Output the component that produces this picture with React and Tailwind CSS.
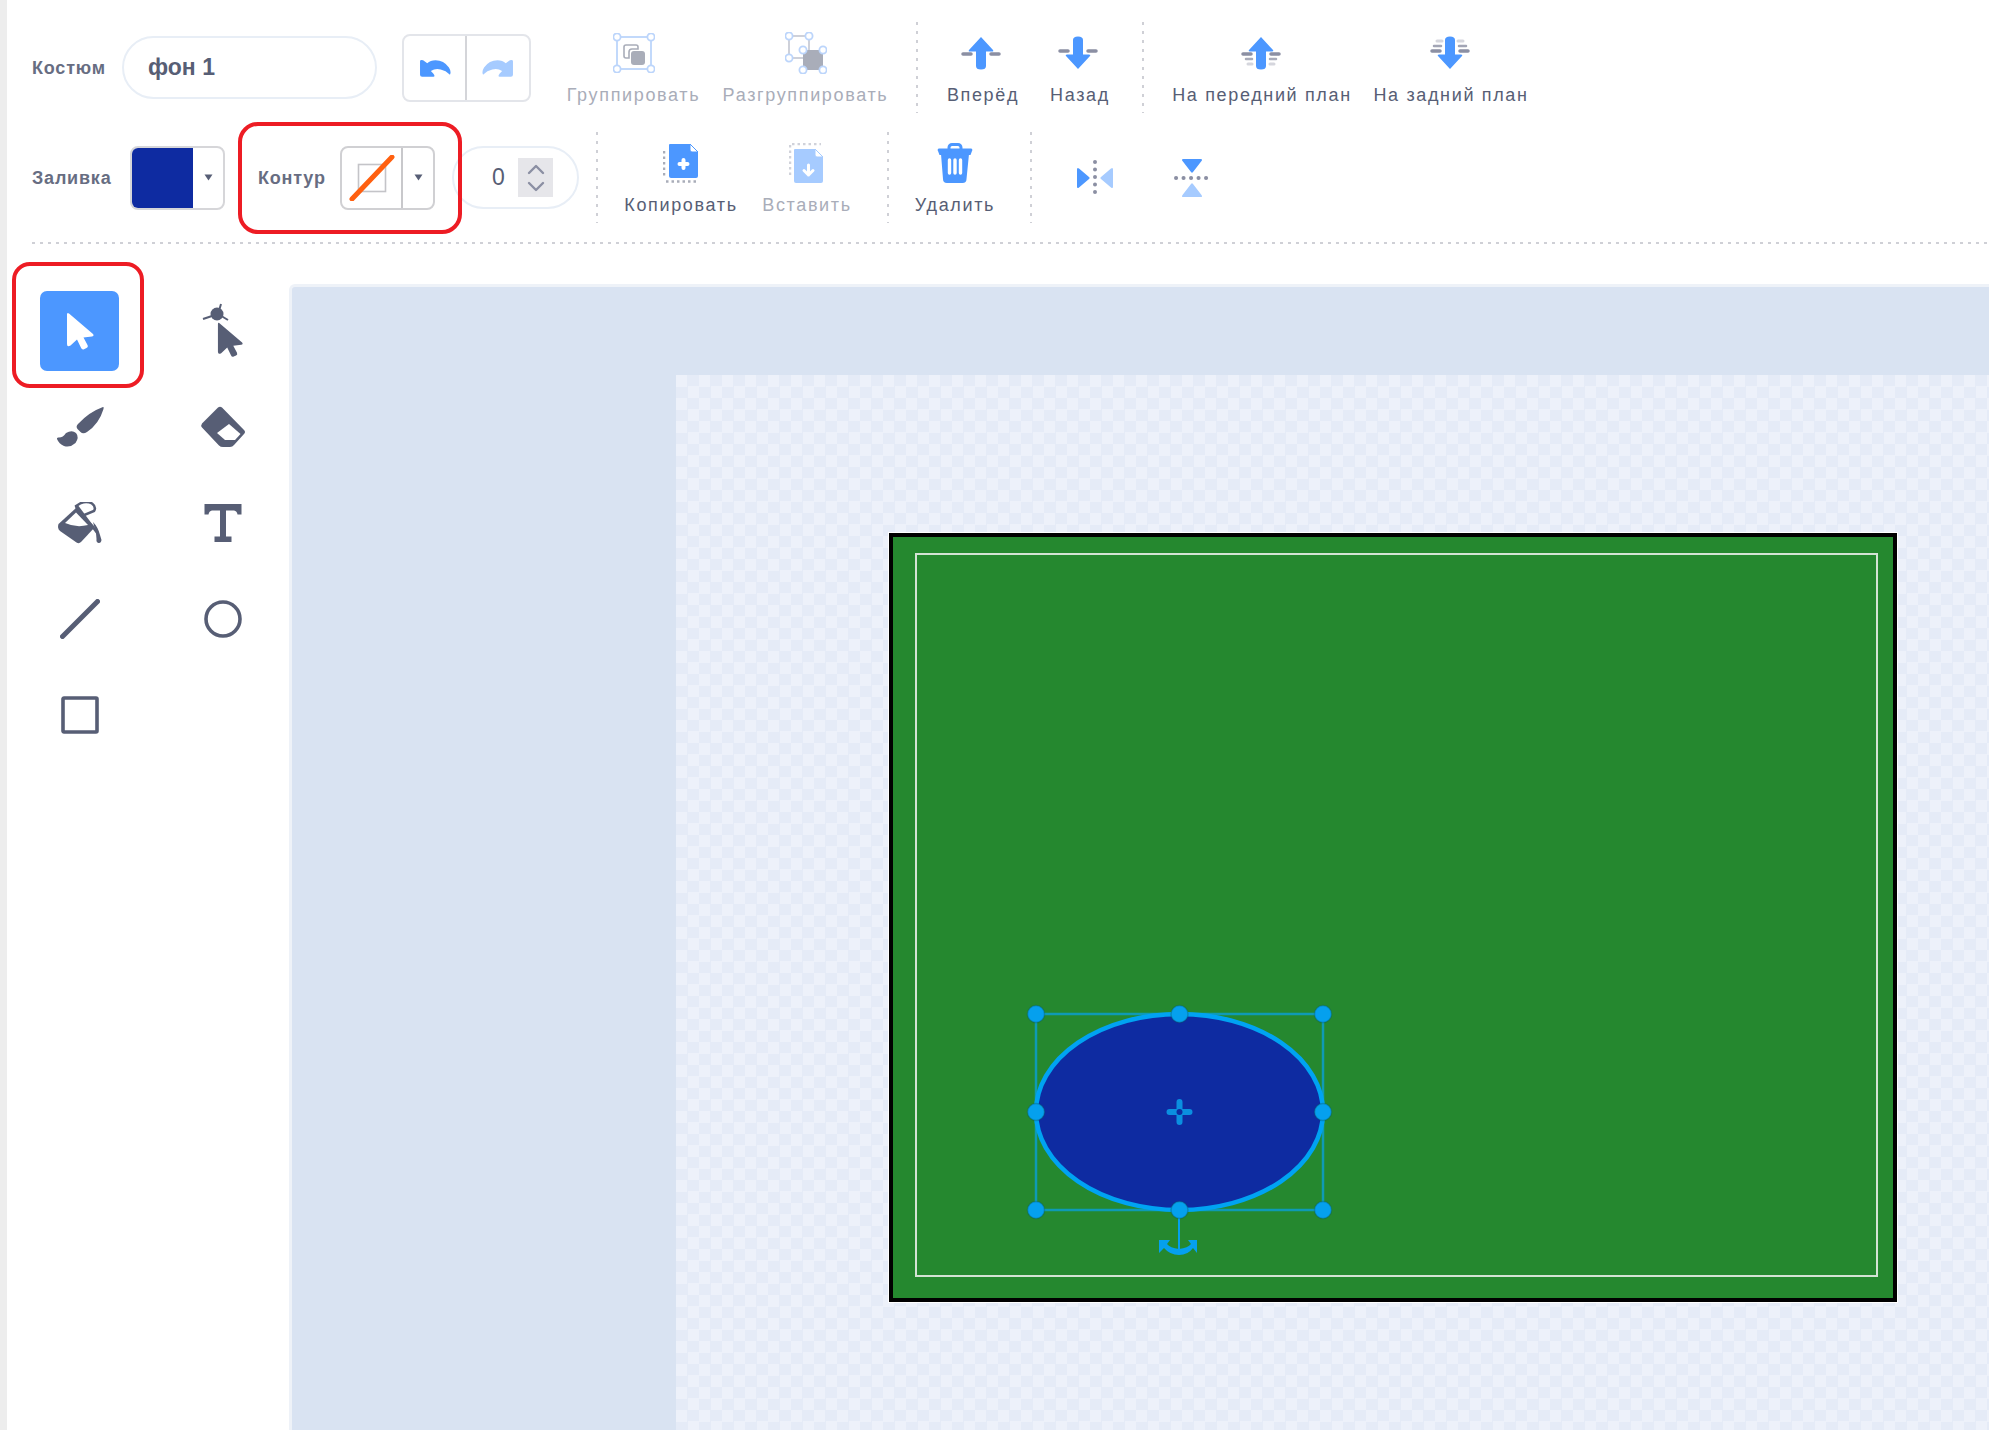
import React from "react";

const ink = "#575e75";
const blue = "#4c97ff";
const lightBlue = "#a6cbff";
const grey = "#8b8fa3";
const handle = "#bcd5fb";

const VDots = () => (
  <div className="w-[2px] h-[91px] shrink-0 bg-[repeating-linear-gradient(180deg,#cfd0d6_0_3px,transparent_3px_9px)]" />
);

function Action({ w, ml, icon, label, muted, iconClass }) {
  return (
    <div style={{ width: w, marginLeft: ml }} className="h-[91px] shrink-0 flex flex-col items-center pt-[11px]">
      <div className={`h-[40px] flex items-center justify-center ${iconClass || ""}`}>{icon}</div>
      <div className={`mt-[12px] h-[20px] leading-[20px] text-[18px] tracking-[1.65px] whitespace-nowrap ${muted ? "text-[#a9adb9]" : "text-[#575e75]"}`}>
        {label}
      </div>
    </div>
  );
}

const Caret = () => (
  <svg width="9" height="7" viewBox="0 0 9 7"><path d="M0.5 0.5H8.5L4.5 6.5Z" fill={ink} /></svg>
);

const GroupIcon = () => (
  <svg width="42" height="40" viewBox="0 0 42 40">
    <rect x="4" y="4" width="34" height="32" fill="none" stroke={handle} strokeWidth="1.8" />
    <path d="M13 12h10a2 2 0 0 1 2 2v2h-6a3 3 0 0 0-3 3v6h-3a2 2 0 0 1-2-2v-9a2 2 0 0 1 2-2Z" fill="none" stroke="#a9adb9" strokeWidth="1.6" />
    <rect x="18" y="18" width="14" height="14" rx="3" fill="#a9adb9" />
    {[[4, 4], [38, 4], [4, 36], [38, 36]].map(([x, y]) => (
      <circle key={x + "-" + y} cx={x} cy={y} r="3.6" fill="#fff" stroke={handle} strokeWidth="1.8" />
    ))}
  </svg>
);

const UngroupIcon = () => (
  <svg width="42" height="42" viewBox="0 0 42 42">
    <rect x="4" y="4" width="20" height="22" fill="none" stroke="#c9ccd6" strokeWidth="1.8" />
    <rect x="18" y="18" width="20" height="20" fill="#a9adb9" />
    {[[4, 4], [24, 4], [4, 26], [18, 18], [38, 18], [18, 38], [38, 38]].map(([x, y]) => (
      <circle key={x + "-" + y} cx={x} cy={y} r="3.6" fill="#fff" stroke={handle} strokeWidth="1.8" />
    ))}
  </svg>
);

const UpArrow = ({ lines }) => (
  <svg width="42" height="36" viewBox="0 0 42 36">
    <path d="M3 19h8M31 19h8" stroke={grey} strokeWidth="3.500" strokeLinecap="round" />
    {lines && <path d="M6 24h6M30 24h6" stroke={grey} strokeWidth="2.500" strokeLinecap="round" opacity="0.75" />}
    {lines && <path d="M8 29h4M30 29h4" stroke="#d5d6dd" strokeWidth="3" strokeLinecap="round" />}
    <path d="M21 2 L33 15 Q34 16.500 32 16.500 H26 V31 Q26 34.500 21 34.500 Q16 34.500 16 31 V16.500 H10 Q8 16.500 9 15 Z" fill={blue} />
  </svg>
);

const DownArrow = ({ lines }) => (
  <svg width="42" height="36" viewBox="0 0 42 36">
    {lines && <path d="M8 6h5M29 6h5" stroke="#d5d6dd" strokeWidth="3" strokeLinecap="round" />}
    {lines && <path d="M5 11h7M30 11h7" stroke={grey} strokeWidth="2.500" strokeLinecap="round" opacity="0.8" />}
    <path d="M3 16h8M31 16h8" stroke={grey} strokeWidth="3.500" strokeLinecap="round" />
    <path d="M21 34 L33 21 Q34 19.500 32 19.500 H26 V5 Q26 1.500 21 1.500 Q16 1.500 16 5 V19.500 H10 Q8 19.500 9 21 Z" fill={blue} />
  </svg>
);

const CopyIcon = () => (
  <svg width="36" height="40" viewBox="0 0 36 40">
    <path d="M1 8V34" stroke="#a9adb9" strokeWidth="2.500" strokeDasharray="2.500 3" />
    <path d="M3 38.500H35" stroke="#a9adb9" strokeWidth="2.500" strokeDasharray="2.500 3" />
    <path d="M6 2a1 1 0 0 1 1-1h20l8 8v24a2 2 0 0 1-2 2H8a2 2 0 0 1-2-2Z" fill={blue} />
    <path d="M27 1v6a2 2 0 0 0 2 2h6Z" fill="#fff" stroke={blue} strokeWidth="1" />
    <path d="M20.500 17v8M16.500 21h8" stroke="#fff" strokeWidth="4" strokeLinecap="round" />
  </svg>
);

const PasteIcon = () => (
  <svg width="36" height="40" viewBox="0 0 36 40">
    <path d="M1 2V32" stroke="#d0d2da" strokeWidth="2.500" strokeDasharray="2.500 3" />
    <path d="M3 1H32" stroke="#d0d2da" strokeWidth="2.500" strokeDasharray="2.500 3" />
    <path d="M5 7a1 1 0 0 1 1-1h20l8 8v24a2 2 0 0 1-2 2H7a2 2 0 0 1-2-2Z" fill={lightBlue} />
    <path d="M26 6v6a2 2 0 0 0 2 2h6Z" fill="#fff" stroke={lightBlue} strokeWidth="1" />
    <path d="M19.500 22v10M15 27.500l4.500 4.500 4.500-4.500" fill="none" stroke="#fff" strokeWidth="3" strokeLinecap="round" strokeLinejoin="round" />
  </svg>
);

const TrashIcon = () => (
  <svg width="36" height="40" viewBox="0 0 36 40">
    <path d="M12 6V4.500A3 3 0 0 1 15 1.500h6a3 3 0 0 1 3 3V6" fill="none" stroke={blue} strokeWidth="3" />
    <path d="M2 5.500h32a1.500 1.500 0 0 1 1 2.500l-1.500 4H2.500L1 8a1.500 1.500 0 0 1 1-2.500Z" fill={blue} />
    <path d="M4 11h28l-2.500 25a4 4 0 0 1-4 4h-15.500a4 4 0 0 1-4-4Z" fill={blue} />
    <path d="M12.500 17v13M18 17v13M23.500 17v13" stroke="#fff" strokeWidth="3.400" strokeLinecap="round" />
  </svg>
);

const FlipH = () => (
  <svg width="40" height="36" viewBox="0 0 40 36">
    <path d="M2 9.500 Q2 7 4 8.500 L14 17 Q15.500 18 14 19 L4 27.500 Q2 29 2 26.500Z" fill={blue} />
    <path d="M38 9.500 Q38 7 36 8.500 L26 17 Q24.500 18 26 19 L36 27.500 Q38 29 38 26.500Z" fill={lightBlue} />
    <path d="M20 2V34" stroke={grey} strokeWidth="4" strokeLinecap="round" strokeDasharray="0.1 7.400" />
  </svg>
);

const FlipV = () => (
  <svg width="36" height="40" viewBox="0 0 36 40">
    <path d="M9.500 1 Q7 1 8.500 3 L17 14 Q18 15.500 19 14 L27.500 3 Q29 1 26.500 1Z" fill={blue} />
    <path d="M9.500 39 Q7 39 8.500 37 L17 26 Q18 24.500 19 26 L27.500 37 Q29 39 26.500 39Z" fill={lightBlue} />
    <path d="M2 20H34" stroke={grey} strokeWidth="4" strokeLinecap="round" strokeDasharray="0.1 7.400" />
  </svg>
);

const cursorPath = "M1 2.500Q1 0 3 1.500L27 22Q28.500 24 26 24.500L17.500 25.500L21.500 33Q22.500 35 20.500 36L18 37.200Q16 38 15 35.800L11 27.500L4.500 33.500Q1 35.500 1 32Z";

const undoPath = "M1 2L1 15Q1 17 3 17H14Q16 17 14 14L11.500 11.500Q16 8.500 21 10Q26 11 30 15Q31.500 12 29 8Q24 1 16 1Q11 1 8 4L4 1Q1 0 1 2Z";

const tools = [
  <div key="select" className="w-[79px] h-[80px] rounded-[7px] bg-[#4c97ff] flex items-center justify-center">
    <svg width="28" height="38" viewBox="0 0 28 38"><path d={cursorPath} fill="#fff" /></svg>
  </div>,
  <svg key="reshape" width="46" height="56" viewBox="0 0 46 56" className="-ml-[2px]">
    <path d="M19 11 L22 1M19 11 L4 16M19 11 L29 17" stroke={ink} strokeWidth="2" />
    <circle cx="18" cy="11" r="6.500" fill={ink} />
    <path transform="translate(18 19) scale(0.93)" d={cursorPath} fill={ink} stroke="#fff" strokeWidth="2" paintOrder="stroke" />
  </svg>,
  <svg key="brush" width="48" height="42" viewBox="0 0 48 42">
    <path d="M47 1 Q48 0.500 47.500 3 Q43 18 31 26 Q27 28.500 24.500 26 L21.500 23 Q19.500 20.500 22 18 Q33 6 47 1Z" fill={ink} />
    <path d="M10 27 Q16 23.500 20 27 Q23.500 31 19.500 37 Q14 42 8 40 Q3 38 1 33 Q0.500 31 3 31.500 Q7 31.500 10 27Z" fill={ink} />
  </svg>,
  <svg key="eraser" width="46" height="42" viewBox="0 0 46 42">
    <path d="M18 1.500 Q20 0 22 1.500 L44 24 Q46 26 44 28 L34 39 Q32.500 41 30 41 H23 Q20.500 41 19 39.500 L2 21.500 Q0.500 19.500 2 17.500Z" fill={ink} />
    <path d="M29 18 L40.500 28 L35 34 H25 L17 27 Z" fill="#fff" />
  </svg>,
  <svg key="fill" width="46" height="42" viewBox="0 0 46 42">
    <path d="M1.500 22 L19 6 L38 25 L24 40 Q22 42 19.500 40.500 L3 29 Q0 26 1.500 22Z" fill={ink} />
    <path d="M8 21 L19 10.500 L31 23 Q19 26 8 21Z" fill="#fff" />
    <path d="M24 1 Q30 -1 35 1.500 Q39.500 5 37 9 L25 14 Q20 8 19 4Z" fill="none" stroke={ink} strokeWidth="2.500" />
    <path d="M20 4 L41 32" stroke={ink} strokeWidth="2.500" />
    <path d="M36 20 Q41 25 43 33 L44.500 38 Q44 41.500 41.500 41 Q39 40.500 39.500 37 L39 31Z" fill={ink} />
  </svg>,
  <svg key="text" width="40" height="40" viewBox="0 0 40 40" aria-hidden="true">
    <path d="M1.500 1H38.500V11.500H34.500Q34 8 31 7.500H23V33.500H28.500V39H11.500V33.500H17V7.500H9Q6 8 5.500 11.500H1.500Z" fill={ink} />
  </svg>,
  <svg key="line" width="40" height="40" viewBox="0 0 40 40"><path d="M2.500 37.500L37.500 2.500" stroke={ink} strokeWidth="5" strokeLinecap="round" /></svg>,
  <svg key="oval" width="38" height="38" viewBox="0 0 38 38"><circle cx="19" cy="19" r="17" fill="none" stroke={ink} strokeWidth="3.600" /></svg>,
  <svg key="rect" width="38" height="38" viewBox="0 0 38 38"><rect x="2" y="2" width="34" height="34" rx="1" fill="none" stroke={ink} strokeWidth="3.600" /></svg>,
];

const labelClass = "shrink-0 mt-[2px] text-[18px] font-bold tracking-[0.8px] whitespace-nowrap opacity-90";

export default function App() {
  return (
    <div className="relative w-[1989px] h-[1430px] overflow-hidden bg-white flex font-['Liberation_Sans',Arial,sans-serif] text-[#575e75]">
      <div className="w-[7px] h-full shrink-0 bg-[#ededed]" />
      <div className="flex-1 min-w-0 flex flex-col">
        <div className="pt-[22px] h-[242px] flex flex-col gap-[19px] shrink-0">
          <div className="h-[91px] flex items-center">
            <div className={`w-[90px] ml-[25px] ${labelClass}`}>Костюм</div>
            <div className="w-[255px] h-[63px] shrink-0 rounded-full border-[2px] border-[#e8eef6] flex items-center pl-[24px] text-[23px] font-bold">фон 1</div>
            <div className="ml-[25px] w-[129px] h-[68px] shrink-0 rounded-[8px] border-[2px] border-[#e3e5ea] flex">
              <div className="w-[63px] border-r-[2px] border-[#d4d5d9] flex items-center justify-center">
                <svg width="32" height="18" viewBox="0 0 31 17"><path d={undoPath} fill={blue} /></svg>
              </div>
              <div className="flex-1 flex items-center justify-center">
                <svg width="32" height="18" viewBox="0 0 31 17"><path transform="translate(31 0) scale(-1 1)" d={undoPath} fill={lightBlue} /></svg>
              </div>
            </div>
            <Action w={135} ml={35} icon={<GroupIcon />} label="Группировать" muted />
            <Action w={175} ml={17} icon={<UngroupIcon />} label="Разгруппировать" muted />
            <div className="ml-[23px]"><VDots /></div>
            <Action w={100} ml={15} icon={<UpArrow />} label="Вперёд" iconClass="-translate-x-[2px]" />
            <Action w={94} ml={0} icon={<DownArrow />} label="Назад" iconClass="-translate-x-[2px]" />
            <div className="ml-[15px]"><VDots /></div>
            <Action w={200} ml={18} icon={<UpArrow lines />} label="На передний план" iconClass="-translate-x-[1px]" />
            <Action w={178} ml={0} icon={<DownArrow lines />} label="На задний план" iconClass="-translate-x-[1px]" />
          </div>
          <div className="h-[91px] flex items-center">
            <div className={`w-[98px] ml-[25px] ${labelClass}`}>Заливка</div>
            <div className="w-[95px] h-[64px] shrink-0 rounded-[8px] border-[2px] border-[#d6d6d9] flex overflow-hidden">
              <div className="w-[63px] -ml-[2px] -my-[2px] bg-[#0e2ba1] rounded-l-[8px]" />
              <div className="flex-1 flex items-center justify-center"><Caret /></div>
            </div>
            <div className={`w-[82px] ml-[33px] ${labelClass}`}>Контур</div>
            <div className="w-[95px] h-[64px] shrink-0 rounded-[8px] border-[2px] border-[#d0d0d3] flex">
              <div className="w-[61px] border-r-[2px] border-[#c8c8cb] flex items-center justify-center">
                <svg width="46" height="46" viewBox="0 0 46 46">
                  <rect x="9.500" y="9.500" width="27" height="27" fill="none" stroke="#c4c4c8" strokeWidth="1.600" />
                  <path d="M3 44L43 2" stroke="#ff6010" strokeWidth="5" strokeLinecap="round" />
                </svg>
              </div>
              <div className="flex-1 flex items-center justify-center"><Caret /></div>
            </div>
            <div className="ml-[17px] w-[127px] h-[63px] shrink-0 rounded-full border-[2px] border-[#e8eef6] flex items-center pl-[38px] gap-[11px]">
              <span className="text-[23px] w-[15px] leading-none">0</span>
              <div className="w-[35px] h-[39px] bg-[#e6e6ea] flex items-center justify-center">
                <svg width="20" height="30" viewBox="0 0 20 30"><path d="M3 10L10 3L17 10M3 20L10 27L17 20" fill="none" stroke={grey} strokeWidth="2.400" strokeLinecap="round" strokeLinejoin="round" /></svg>
              </div>
            </div>
            <div className="ml-[17px]"><VDots /></div>
            <Action w={130} ml={18} icon={<CopyIcon />} label="Копировать" />
            <Action w={122} ml={0} icon={<PasteIcon />} label="Вставить" muted />
            <div className="ml-[19px]"><VDots /></div>
            <Action w={100} ml={16} icon={<TrashIcon />} label="Удалить" />
            <div className="ml-[25px]"><VDots /></div>
            <div className="ml-[33px] w-[60px] flex justify-center"><FlipH /></div>
            <div className="ml-[37px] w-[60px] flex justify-center"><FlipV /></div>
          </div>
        </div>
        <div className="ml-[25px] h-[2px] shrink-0 bg-[repeating-linear-gradient(90deg,#cfd0d6_0_3px,transparent_3px_8px)]" />
        <div className="flex-1 min-h-0 flex pt-[39px]">
          <div className="w-[282px] shrink-0">
            <div className="grid grid-cols-[145px_142px] auto-rows-[96px] justify-items-center items-center">
              {tools}
            </div>
          </div>
          <div className="flex-1 min-w-0 mt-[1px] rounded-tl-[6px] border-l-[3px] border-t-[3px] border-[#eef2f8] bg-[#d9e3f2] pl-[384px] pt-[88px]">
            <div className="h-full pl-[213px] pt-[158px] bg-[repeating-conic-gradient(#e5ebf7_0_25%,#edf1fa_0_50%)] bg-[length:23px_23px]">
              <div className="relative w-[1008px] h-[769px] border-[4px] border-black bg-[#25882f] shadow-[0_0_0_1px_#ffffff] pl-[22px] pt-[16px]">
                <div className="w-[963px] h-[724px] border-[2px] border-[#d3e3d4]" />
                <svg className="absolute left-0 top-0" width="1000" height="761" viewBox="893 537 1000 761">
                  <rect x="1036" y="1014" width="287" height="196" fill="none" stroke="#0f9ab4" strokeWidth="2.500" />
                  <ellipse cx="1179.500" cy="1112" rx="143.500" ry="98" fill="#0e2ba1" stroke="#00a3f2" strokeWidth="4.500" />
                  <path d="M1179 1210V1250" stroke="#05a0ee" strokeWidth="2" />
                  <path d="M1159 1240H1170L1167 1244Q1170 1248 1179 1249Q1188 1248 1191 1244L1188 1240H1197V1253L1193 1248Q1188 1255 1179 1255Q1170 1255 1164 1248L1159 1253Z" fill="#05a0ee" />
                  <path d="M1179.500 1102V1122M1169.500 1112H1189.500" stroke="#0a8fe0" strokeWidth="6" strokeLinecap="round" />
                  <circle cx="1179.500" cy="1112" r="3" fill="#0e2ba1" />
                  {[[1036, 1014], [1179.500, 1014], [1323, 1014], [1036, 1112], [1323, 1112], [1036, 1210], [1179.500, 1210], [1323, 1210]].map(([x, y]) => (
                    <circle key={x + "-" + y} cx={x} cy={y} r="8.500" fill="#05a0ee" stroke="#0a5a60" strokeOpacity="0.35" strokeWidth="1.500" />
                  ))}
                </svg>
              </div>
            </div>
          </div>
        </div>
      </div>
      <div className="absolute left-[238px] top-[122px] w-[224px] h-[112px] rounded-[20px] border-[4px] border-[#ed1c24]" />
      <div className="absolute left-[12px] top-[262px] w-[132px] h-[126px] rounded-[18px] border-[4px] border-[#ed1c24]" />
    </div>
  );
}
